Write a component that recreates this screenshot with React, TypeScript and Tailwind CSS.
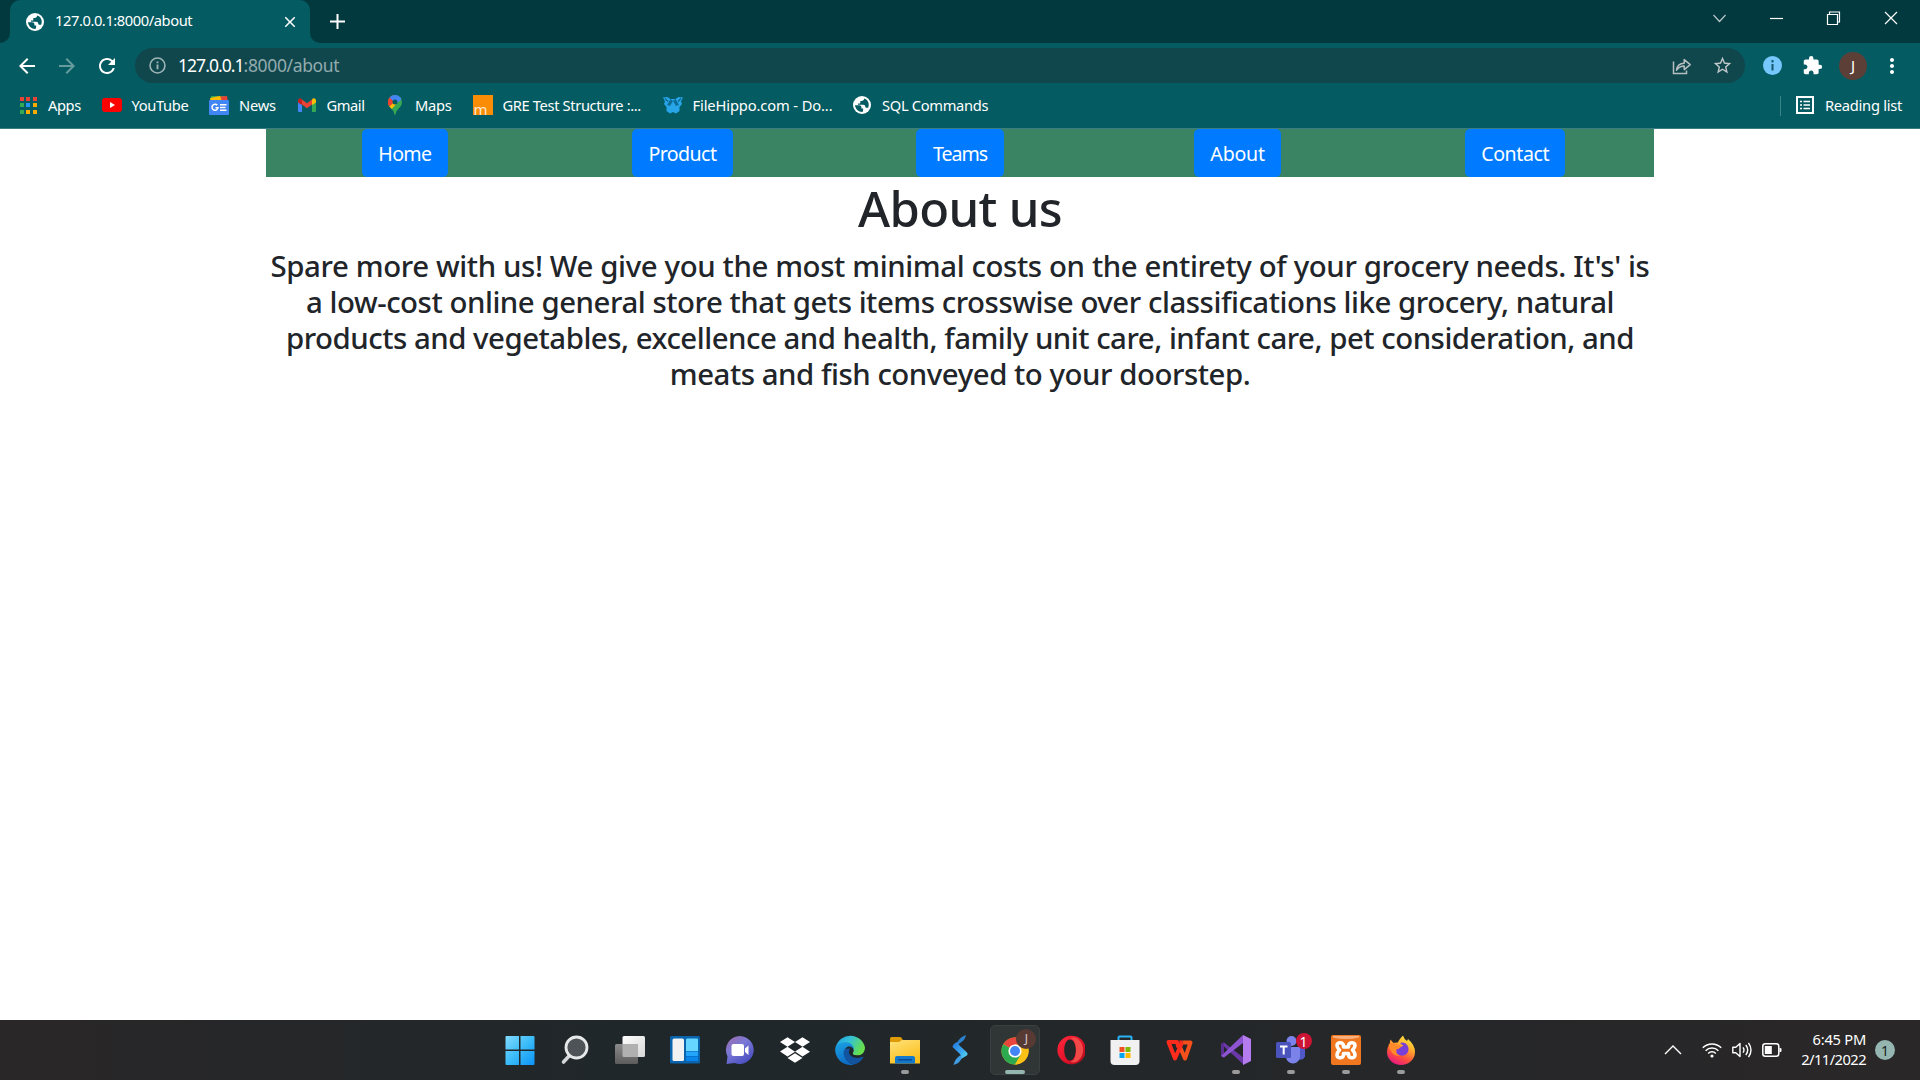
import type { ReactNode } from "react";
import {
  MdArrowBack,
  MdArrowForward,
  MdClose,
  MdExtension,
  MdMoreVert,
  MdRefresh,
  MdStarBorder,
} from "react-icons/md";
import { FaDropbox } from "react-icons/fa";

/* ---------- Browser icons ---------- */

function GlobeIcon() {
  return (
    <svg viewBox="0 0 18 18" className="size-[18px]">
      <circle cx="9" cy="9" r="9" fill="#fff" />
      <path
        d="M2 9.2h4.2c1.5 0 2.2.8 2.2 2v1.2h1.7v2.2c0 .6-.3 1-.7 1.300C5.500 16 2.300 13 2 9.200zM11.300 2.600c-.3 1.700-1.300 2.300-2.700 2.300H7.300v1.800c0 .6-.5.9-1.200.9H5v1.200h5.200c1.500 0 1.900.8 2 1.700.1.900.6 1.200 1.700 1.200h1.300C16.900 7.500 14.700 3.800 11.300 2.600z"
        fill="#055b62"
      />
    </svg>
  );
}

function AppsIcon() {
  const colors = ["#ea4335", "#ea4335", "#ea4335", "#34a853", "#2196f3", "#f9ab00", "#34a853", "#f9ab00", "#f9ab00"];
  return (
    <div className="grid grid-cols-3 gap-x-[2.500px] gap-y-[2.500px]">
      {colors.map((c, i) => (
        <svg key={i} viewBox="0 0 4 4" className="size-1">
          <rect width="4" height="4" fill={c} />
        </svg>
      ))}
    </div>
  );
}

function YouTubeIcon() {
  return (
    <svg viewBox="0 0 20 14" className="h-[14px] w-5">
      <rect width="20" height="14" rx="3" fill="#f00" />
      <path d="M8 4v6l5-3z" fill="#fff" />
    </svg>
  );
}

function NewsIcon() {
  return (
    <svg viewBox="0 0 20 20" className="size-5">
      <rect x="2" y="1" width="14" height="8" fill="#34a853" />
      <path d="M6 2l12-1 1 7H6z" fill="#ea4335" />
      <path d="M1 3l10-2 3 8H2z" fill="#fbbc04" />
      <rect y="5" width="20" height="15" rx="1" fill="#4285f4" />
      <path d="M8.300 10.300A3 3 0 1 0 9 12.700H6.500M11 9.700h6.500M11 12.500h5.500M11 15.300h6.500" stroke="#fff" strokeWidth="1.500" fill="none" />
    </svg>
  );
}

function GmailIcon() {
  return (
    <svg viewBox="0 0 18 14" className="h-[14px] w-[18px]">
      <path d="M0 3v10q0 1 1 1h3V6z" fill="#4285f4" />
      <path d="M18 3v10q0 1-1 1h-3V6z" fill="#34a853" />
      <path d="M4 1.500v5l5 3.800 5-3.800v-5L9 5.300z" fill="#ea4335" />
      <path d="M0 3v1.500L4 7V1.500L3.300.8C1.900-.4 0 .8 0 3z" fill="#c5221f" />
      <path d="M18 3v1.500L14 7V1.500l.7-.7C16.100-.4 18 .8 18 3z" fill="#fbbc04" />
    </svg>
  );
}

function MapsIcon() {
  return (
    <svg viewBox="0 0 14 20" className="h-5 w-[14px]">
      <defs>
        <clipPath id="pin">
          <path d="M7 0a7 7 0 0 0-7 7c0 3 1.500 4.600 3.300 6.600C5.200 15.700 6 17.300 6.300 19c.1.600.3 1 .7 1s.6-.4.7-1c.3-1.700 1.100-3.300 3-5.400C12.500 11.600 14 10 14 7a7 7 0 0 0-7-7z" />
        </clipPath>
      </defs>
      <g clipPath="url(#pin)">
        <rect width="14" height="20" fill="#34a853" />
        <path d="M14 3L0 18V6l7-4z" fill="#fbbc04" />
        <path d="M0 0h5l3 5-6 6H0z" fill="#ea4335" />
        <path d="M3 0h11v4L8 9 1.500 2.500z" fill="#4285f4" />
        <path d="M0 2l5 4-4 4H0z" fill="#ea4335" />
      </g>
      <circle cx="7" cy="7" r="2.500" fill="#055b62" />
    </svg>
  );
}

function ManhattanIcon() {
  return (
    <div className="flex h-5 w-5 justify-start bg-[#fb8c05] pl-px">
      <span className="pt-[4px] text-[15px] leading-5 text-[#ffe9cf]">m</span>
    </div>
  );
}

function HippoIcon() {
  return (
    <svg viewBox="0 0 20 18" className="h-[18px] w-5">
      <path d="M0 1.500L4.500 1 7.500 3h5l3-2 4.500.5-2 4 1 2.500-2.500 3v4L13 17.500l-3-1.500-3 1.500L3.500 15v-4L1 8l1-2.500z" fill="#27a5e8" />
      <path d="M7.500 3L4 9l3 1 3-5zM12.500 3L16 9l-3 1-3-5z" fill="#0d6d99" />
      <path d="M2 2.500l3 3M18 2.500l-3 3" stroke="#0b6a8c" strokeWidth="1.300" />
    </svg>
  );
}

function InfoIcon() {
  return (
    <svg viewBox="0 0 18 18" className="size-[17px]" fill="none" stroke="#9db4b6" strokeWidth="1.700">
      <circle cx="9" cy="9" r="7.900" />
      <path d="M9 8v5M9 4.800v1.800" strokeWidth="2" />
    </svg>
  );
}

function ShareIcon() {
  return (
    <svg viewBox="0 0 20 18" className="h-[18px] w-5" fill="none" stroke="#b5bfc0" strokeWidth="1.500">
      <path d="M1.500 4.500v12h13v-3" />
      <path d="M4.500 13.200c.5-4.200 3-6.700 7.700-6.900V2.600l6 5-6 5V9c-3.500 0-5.700 1.300-7.700 4.200z" strokeLinejoin="round" />
    </svg>
  );
}

function ReadingListIcon() {
  return (
    <svg viewBox="0 0 18 18" className="size-[18px]" fill="none" stroke="#fff" strokeWidth="2">
      <rect x="1" y="1" width="16" height="16" />
      <path d="M4 5.500h2M4 9h2M4 12.500h2M7.500 5.500H14M7.500 9H14M7.500 12.500H14" strokeWidth="1.600" />
    </svg>
  );
}

/* ---------- Taskbar icons ---------- */

function WindowsIcon() {
  return (
    <svg viewBox="0 0 30 30" className="size-[30px]">
      <defs>
        <linearGradient id="win" gradientUnits="userSpaceOnUse" x1="0" y1="0" x2="30" y2="30">
          <stop stopColor="#86dcfd" />
          <stop offset=".5" stopColor="#3cbcf9" />
          <stop offset="1" stopColor="#0b93f5" />
        </linearGradient>
      </defs>
      <path
        d="M1.500 1H14v13.500H.5V2q0-1 1-1zM15.500 1H28.500q1 0 1 1v12.500h-14zM.5 16H14v14H1.500q-1 0-1-1zM15.500 16h14v13q0 1-1 1h-13z"
        fill="url(#win)"
      />
    </svg>
  );
}

function SearchIcon() {
  return (
    <svg viewBox="0 0 30 30" className="size-[30px]">
      <path d="M10.500 19.500L3.500 27" stroke="#d4d6d7" strokeWidth="3.600" strokeLinecap="round" />
      <circle cx="16.500" cy="12.500" r="10.500" fill="#4d5356" stroke="#e6e8e9" strokeWidth="2.800" />
    </svg>
  );
}

function TaskViewIcon() {
  return (
    <svg viewBox="0 0 30 30" className="size-[30px]">
      <defs>
        <linearGradient id="tv" x2="1" y2="1">
          <stop stopColor="#fff" />
          <stop offset="1" stopColor="#d6d6d6" />
        </linearGradient>
        <linearGradient id="tv2" x2="0" y2="1">
          <stop stopColor="#8b8b8b" />
          <stop offset="1" stopColor="#5c5c5c" />
        </linearGradient>
      </defs>
      <rect x="7.500" y="1" width="22.500" height="21" rx="1.500" fill="url(#tv)" />
      <rect x="0" y="9" width="23" height="20" rx="1.500" fill="url(#tv2)" />
      <path d="M7.500 9H23v13H9q-1.500 0-1.500-1.500z" fill="#b0b0b0" />
    </svg>
  );
}

function WidgetsIcon() {
  return (
    <svg viewBox="0 0 30 30" className="size-[30px]">
      <rect y="1" width="30" height="27.500" rx="1.500" fill="#0963ad" />
      <rect x="2.500" y="3.500" width="11.500" height="22.500" rx="1.500" fill="#f2f2f2" />
      <path d="M16 4.500q0-1 1-1h10q1 0 1 1V16H16z" fill="#66d5ff" />
      <path d="M16 16.500h12V21H16z" fill="#23a5f9" />
      <path d="M16 21.500h12V25q0 1-1 1H17q-1 0-1-1z" fill="#0a86ea" />
    </svg>
  );
}

function ChatIcon() {
  return (
    <svg viewBox="0 0 30 30" className="size-[30px]">
      <defs>
        <linearGradient id="chat" x1="0" y1="0" x2=".7" y2="1">
          <stop stopColor="#a06aa8" />
          <stop offset=".45" stopColor="#7b78d6" />
          <stop offset="1" stopColor="#4a4fc0" />
        </linearGradient>
      </defs>
      <path d="M15 1a14 14 0 1 1-5.500 27L1.500 29l1-7.500A14 14 0 0 1 15 1z" fill="url(#chat)" />
      <rect x="6.500" y="9" width="12.500" height="12" rx="2" fill="#fff" />
      <path d="M20 13.500l3.500-3v9.500L20 17z" fill="#fff" />
    </svg>
  );
}

function EdgeIcon() {
  return (
    <svg viewBox="0 0 30 30" className="size-[30px]">
      <defs>
        <linearGradient id="eg1" x1="0" y1="0" x2="1" y2=".4">
          <stop stopColor="#1d9de0" />
          <stop offset=".5" stopColor="#35c1d6" />
          <stop offset="1" stopColor="#66e04d" />
        </linearGradient>
        <linearGradient id="eg2" x1="0" y1="0" x2=".4" y2="1">
          <stop stopColor="#1ba4e6" />
          <stop offset="1" stopColor="#0d6cc4" />
        </linearGradient>
      </defs>
      <path d="M.8 12A15 15 0 0 1 30 12.500c0 5-3.500 8-7.700 8-3.500 0-5.300-1.200-4.700-2.500 3-5-1.600-9.500-6.100-9.500C6 8.500 2 10 .8 12z" fill="url(#eg1)" />
      <path d="M.5 12C2.500 8.500 7 7.200 11 7.200c5 0 8.500 4 7.800 8-.3-2-2-3.800-4.500-3.800-4 0-5.500 4-4.500 8.500 1 5 5 9.300 9.500 9.500A15 15 0 0 1 .5 12z" fill="url(#eg2)" />
      <path d="M8.600 17c-.4 6 4.500 12.500 11.400 12.200 3.500-1 6.500-3.500 8.300-6.700.3-.7-.3-1-.8-.7-4.500 2.200-12.500 1.200-13.300-4-.2-1.500.2-3 .8-4-4-.8-6.200 1-6.400 3.200z" fill="#1254a0" />
      <path d="M14.200 17.500c.2-3 2.300-3.300 4.400-2.500.2 1.500-.9 2.500-.9 3.500 0 1.500 3 2.300 6 1.800-1 1.300-8.500 2.500-9.500-2.800z" fill="#1f2629" />
    </svg>
  );
}

function ExplorerIcon() {
  return (
    <svg viewBox="0 0 30 30" className="size-[30px]">
      <defs>
        <linearGradient id="fold" x2=".5" y2="1">
          <stop stopColor="#ffe27a" />
          <stop offset="1" stopColor="#fbbf1e" />
        </linearGradient>
      </defs>
      <path d="M0 3.500Q0 2 1.500 2h8.300q1 0 1.700.8L13 5.200V9H0z" fill="#dd9a06" />
      <path d="M0 7h9l3-2h18v23.500H0z" fill="url(#fold)" />
      <path d="M5 28.500V23q0-2 2-2h16q2 0 2 2v5.500z" fill="#1379cc" />
      <rect x="8" y="24" width="14" height="1.500" rx=".7" fill="#0a4a94" />
    </svg>
  );
}

function StreamIcon() {
  return (
    <svg viewBox="0 0 30 30" className="size-[30px]">
      <defs>
        <linearGradient id="st" x2="1" y2="1">
          <stop stopColor="#2176d8" />
          <stop offset=".55" stopColor="#3aa4ee" />
          <stop offset="1" stopColor="#57e0ef" />
        </linearGradient>
      </defs>
      <path d="M21 0q-1 5-4.500 7L13 9.500V6q3-4.500 8-6z" fill="#2a82cf" />
      <path d="M7.500 12q0-2 2-3.500L13 6.500q-.5 2.500 2 4.500l6.500 6q2 2 .3 3.500L16 24q1-3-1-5z" fill="url(#st)" />
      <path d="M8.500 30q1-4.500 3.500-7l3.500-3q1.500 2 .5 4.500-2 4-7.500 5.500z" fill="#3f9de4" />
    </svg>
  );
}

function ChromeIcon() {
  return (
    <svg viewBox="-1 0 30 30" className="size-[30px]">
      <circle cx="14" cy="16" r="13.500" fill="#fbc116" />
      <path d="M14 16L2.300 9.200a13.500 13.500 0 0 1 23.400 0z" fill="#e8453c" />
      <path d="M14 16L2.300 9.250A13.500 13.500 0 0 0 14 29.500l6-10z" fill="#2da94f" />
      <path d="M14 9.500h12a13.500 13.500 0 0 1-12 20l6-10z" fill="#fbc116" />
      <circle cx="14" cy="16" r="6.600" fill="#fff" />
      <circle cx="14" cy="16" r="5" fill="#4285f4" />
    </svg>
  );
}

function OperaIcon() {
  return (
    <svg viewBox="0 0 30 30" className="size-[30px]">
      <defs>
        <linearGradient id="op" x2=".9" y2=".9">
          <stop stopColor="#ff2a3c" />
          <stop offset=".6" stopColor="#e3122a" />
          <stop offset="1" stopColor="#b00d1c" />
        </linearGradient>
      </defs>
      <path d="M15 .8a14.300 14.300 0 1 1 0 28.400 14.300 14.300 0 0 1 0-28.400zM15 4.500c-3.500 0-5.800 5-5.800 10.500S11.500 25.500 15 25.500 20.800 20.500 20.800 15 18.500 4.500 15 4.500z" fillRule="evenodd" fill="url(#op)" />
      <path d="M15 3.500c2-1.500 6-1.300 8.500 1A14.200 14.200 0 0 1 23.500 25.500c-2.500 2.300-6.500 2.500-8.500 1 4 0 6-5.500 6-11.500S19 3.500 15 3.500z" fill="#f24848" />
    </svg>
  );
}

function StoreIcon() {
  return (
    <svg viewBox="0 0 30 30" className="size-[30px]">
      <path d="M8.500 6V2.500Q8.500 1.500 9.500 1.500h11q1 0 1 1V6" fill="none" stroke="#29b2f4" strokeWidth="2" />
      <path d="M.5 5.500q0-.5.500-.5h28q.5 0 .5.500V26q0 4-4 4h-21q-4 0-4-4z" fill="#f1f1f1" />
      <path d="M9.500 12h5v5h-5z" fill="#f25022" />
      <path d="M15.500 12h5v5h-5z" fill="#7fba00" />
      <path d="M9.500 18h5v5h-5z" fill="#00a4ef" />
      <path d="M15.500 18h5v5h-5z" fill="#ffb900" />
    </svg>
  );
}

function WpsIcon() {
  return (
    <svg viewBox="0 0 30 30" className="size-[30px]" fill="none" strokeWidth="4" strokeLinejoin="round">
      <path d="M17.500 7.500h8L20 23.500l-5-11.500" stroke="#f5501c" />
      <path d="M17.500 7.500h-3M13.500 12.500L12 7H3.500L10 23.500 17 7.500" stroke="#ff2b1c" />
    </svg>
  );
}

function VisualStudioIcon() {
  return (
    <svg viewBox="0 0 30 30" className="size-[30px]">
      <path d="M0 9l3-1.500L23 23v7L2 10.500V19.500L0 21z" fill="#6a38a8" />
      <path d="M0 9v12l3 1.500V7.500z" fill="#5b2e91" />
      <path d="M22 0l8 4v22l-8 4z" fill="#b57cf0" />
      <path d="M22 0v8L3 22.500 0 21z" fill="#8d55d2" />
    </svg>
  );
}

function TeamsIcon() {
  return (
    <svg viewBox="0 0 30 30" className="size-[30px]">
      <path d="M21 12h8v9.500a5 5 0 0 1-8 2z" fill="#5059c9" />
      <circle cx="15.500" cy="6" r="5" fill="#7b83eb" />
      <path d="M10 12h14v9a7 7 0 0 1-14 1z" fill="#7b83eb" />
      <rect x="0" y="7" width="15" height="16" rx="1.500" fill="#4b53bc" />
      <path d="M4 11.500h7.500M7.700 11.500v8" stroke="#fff" strokeWidth="2" />
    </svg>
  );
}

function XamppIcon() {
  return (
    <svg viewBox="0 0 30 30" className="size-[30px]">
      <rect width="30" height="30" rx="2" fill="#f0761f" />
      <path d="M2 1h26v1.500q-13 3-26 0z" fill="#f7b080" />
      <path
        d="M12.500 10.500C12 7 6 6.500 6 10.500c0 2 1 3 2.500 4.500C7 16.500 6 17.500 6 20c0 4 6 3.500 6.500 0v-1.500h5V20c.5 3.500 6.500 4 6.500 0 0-2.500-1-3.500-2.500-5 1.500-1.500 2.500-2.500 2.500-4.500 0-4-6-3.500-6.500 0V12h-5z"
        fill="none"
        stroke="#fff"
        strokeWidth="3.600"
        strokeLinejoin="round"
      />
    </svg>
  );
}

function FirefoxIcon() {
  return (
    <svg viewBox="0 0 30 30" className="size-[30px]">
      <defs>
        <linearGradient id="ff" x1=".8" y1="0" x2=".3" y2="1">
          <stop stopColor="#fff044" />
          <stop offset=".35" stopColor="#ffb02e" />
          <stop offset=".7" stopColor="#ff4f3c" />
          <stop offset="1" stopColor="#e31587" />
        </linearGradient>
      </defs>
      <path d="M4.500 4.500l3 3.500q2-.8 4-.3Q13 4.500 17 .5q1 3.500 4 5.500l1-2q7 6 7 13a14 13 0 0 1-28 0q0-4.500 2.500-8z" fill="url(#ff)" />
      <path d="M14 8q5-1.500 7.500 2.500 2.500 5-1 8.500-4 3-8.500.5-3-2-2.500-5.500 3 .5 4.500-1.500 2-1 3.500-2-1.500-.5-3.500-2.500z" fill="#7a3fd8" />
      <path d="M2.500 9.500l5-1 5 1.500 3 1.500q-2 2-5 3-1 5 3.500 6-5 1-8-3T2.500 9.500z" fill="#ff8a2a" />
    </svg>
  );
}

/* ---------- Browser chrome ---------- */

function TabStrip() {
  return (
    <div className="flex h-[43px]">
      <div className="w-[10px] rounded-br-[10px] bg-[#01393f]" />
      <div className="bg-[#01393f]">
        <div className="flex h-[43px] w-[300px] items-center rounded-t-[10px] bg-[#055b62] pl-4 pr-[11px]">
          <GlobeIcon />
          <span className="ml-[11px] flex-1 pb-[2px] text-[14.700px] tracking-[-0.430px] text-white">127.0.0.1:8000/about</span>
          <MdClose className="size-[18px] text-white" />
        </div>
      </div>
      <div className="flex flex-1 items-center rounded-bl-[10px] bg-[#01393f] pl-[20px]">
        <svg viewBox="0 0 15 15" className="size-[15px]" stroke="#fff" strokeWidth="2">
          <path d="M7.500 0v15M0 7.500h15" />
        </svg>
        <svg viewBox="0 0 200 14" className="mb-[7px] ml-auto mr-[21px] h-[14px] w-[200px]" fill="none" stroke="#fff" strokeWidth="1.200">
          <path d="M14.500 4l6 6.500 6-6.500" stroke="#b9c8c9" />
          <path d="M71 7.500h13" />
          <path d="M128.500 3.500h10v10h-10zM130.500 3.500v-2.500h10v10h-2" />
          <path d="M186 1l12 12M198 1l-12 12" />
        </svg>
      </div>
    </div>
  );
}

function Toolbar() {
  return (
    <div className="flex h-[45px] items-center pl-[15px]">
      <MdArrowBack className="size-6 shrink-0 text-white" />
      <MdArrowForward className="ml-4 size-6 shrink-0 text-[#679c9f]" />
      <MdRefresh className="ml-4 size-6 shrink-0 text-white" />
      <div className="ml-4 flex h-[35px] w-[1610px] shrink-0 items-center rounded-full bg-[#10474d] pl-[14px] pr-3">
        <InfoIcon />
        <span className="ml-3 pb-[1px] text-[17.500px] text-white">
          <span className="tracking-[-0.950px]">127.0.0.1</span>
          <span className="tracking-[-0.350px] text-[#93abad]">:8000/about</span>
        </span>
        <div className="ml-auto flex items-center gap-5">
          <ShareIcon />
          <MdStarBorder className="size-[21px] text-[#c1c8c9]" />
        </div>
      </div>
      <svg viewBox="0 0 19 19" className="ml-[18px] size-[19px] shrink-0">
        <circle cx="9.500" cy="9.500" r="9.500" fill="#76c8fc" />
        <path d="M9.500 8v6.500M9.500 4v2.500" stroke="#15566b" strokeWidth="2" />
      </svg>
      <MdExtension className="ml-[20px] size-[21px] shrink-0 text-white" />
      <div className="ml-4 flex size-7 shrink-0 items-center justify-center rounded-full bg-[#5c4038] text-[15px] text-white">
        J
      </div>
      <MdMoreVert className="ml-[13px] size-6 shrink-0 text-white" />
    </div>
  );
}

function Bookmark({ icon, label, className }: { icon: ReactNode; label: string; className: string }) {
  return (
    <div className={`flex shrink-0 items-center whitespace-nowrap text-[14.700px] text-white ${className}`}>
      <div className="mr-[10px] flex w-5 justify-center">{icon}</div>
      <span>{label}</span>
    </div>
  );
}

function BookmarksBar() {
  return (
    <div className="flex h-[41px] items-center border-b border-[#3b7d83] pb-[5px] pl-[18px] pr-[18px]">
      <Bookmark className="w-[83.500px] tracking-[-0.400px]" icon={<AppsIcon />} label="Apps" />
      <Bookmark className="w-[107.500px] tracking-[-0.350px]" icon={<YouTubeIcon />} label="YouTube" />
      <Bookmark className="w-[87.500px] tracking-[-0.200px]" icon={<NewsIcon />} label="News" />
      <Bookmark className="w-[88.500px] tracking-[-0.450px]" icon={<GmailIcon />} label="Gmail" />
      <Bookmark className="w-[87.500px] tracking-[-0.300px]" icon={<MapsIcon />} label="Maps" />
      <Bookmark className="w-[190px] tracking-[-0.370px]" icon={<ManhattanIcon />} label="GRE Test Structure :..." />
      <Bookmark className="w-[189.500px] tracking-[-0.120px]" icon={<HippoIcon />} label="FileHippo.com - Do..." />
      <Bookmark className="tracking-[-0.320px]" icon={<GlobeIcon />} label="SQL Commands" />
      <div className="ml-auto mr-[14px] h-5 w-px bg-[#3d8288]" />
      <Bookmark className="w-[107px] tracking-[-0.280px]" icon={<ReadingListIcon />} label="Reading list" />
    </div>
  );
}

/* ---------- Page ---------- */

function NavButton({ label, className }: { label: string; className: string }) {
  return (
    <div className="flex justify-center">
      <button className={`h-12 rounded-[5px] bg-[#007bff] pt-px text-center text-[19.600px] text-white ${className}`}>{label}</button>
    </div>
  );
}

function AboutPage() {
  return (
    <main className="flex-1 bg-white text-[#212529]">
      <div className="mx-auto w-[1388px]">
        <nav className="grid h-12 grid-cols-5 bg-[#3a8463]">
          <NavButton label="Home" className="w-[86px] tracking-[-0.690px]" />
          <NavButton label="Product" className="w-[101px] tracking-[-0.580px]" />
          <NavButton label="Teams" className="w-[88px] tracking-[-1.050px]" />
          <NavButton label="About" className="w-[87px] tracking-[-0.220px]" />
          <NavButton label="Contact" className="w-[100px] tracking-[-0.410px]" />
        </nav>
        <h1 className="mb-[10px] pt-px text-center text-[49px] font-medium leading-[60px] tracking-[-0.650px]">About us</h1>
        <h4 className="whitespace-nowrap text-center text-[29.400px] font-medium leading-[36px]">
          <span className="tracking-[-0.385px]">
            Spare more with us! We give you the most minimal costs on the entirety of your grocery needs. It's' is
          </span>
          <br />
          <span className="tracking-[-0.456px]">
            a low-cost online general store that gets items crosswise over classifications like grocery, natural
          </span>
          <br />
          <span className="tracking-[-0.485px]">
            products and vegetables, excellence and health, family unit care, infant care, pet consideration, and
          </span>
          <br />
          <span className="tracking-[-0.464px]">meats and fish conveyed to your doorstep.</span>
        </h4>
      </div>
    </main>
  );
}

/* ---------- Taskbar ---------- */

type TaskItem = { name: string; icon: ReactNode; running?: boolean; active?: boolean; badge?: ReactNode };

const taskItems: TaskItem[] = [
  { name: "start", icon: <WindowsIcon /> },
  { name: "search", icon: <SearchIcon /> },
  { name: "taskview", icon: <TaskViewIcon /> },
  { name: "widgets", icon: <WidgetsIcon /> },
  { name: "chat", icon: <ChatIcon /> },
  { name: "dropbox", icon: <FaDropbox className="size-[30px] text-white" /> },
  { name: "edge", icon: <EdgeIcon /> },
  { name: "explorer", icon: <ExplorerIcon />, running: true },
  { name: "stream", icon: <StreamIcon /> },
  {
    name: "chrome",
    icon: <ChromeIcon />,
    active: true,
    badge: (
      <div className="absolute right-[3px] top-[3px] flex size-5 items-center justify-center rounded-full bg-[#573a33] text-[12px] text-[#d8cfcc]">J</div>
    ),
  },
  { name: "opera", icon: <OperaIcon /> },
  { name: "store", icon: <StoreIcon /> },
  { name: "wps", icon: <WpsIcon /> },
  { name: "visualstudio", icon: <VisualStudioIcon />, running: true },
  {
    name: "teams",
    icon: <TeamsIcon />,
    running: true,
    badge: (
      <div className="absolute right-[4px] top-[8px] flex size-4 items-center justify-center rounded-full bg-[#cd1435] text-[14px] text-white">1</div>
    ),
  },
  { name: "xampp", icon: <XamppIcon />, running: true },
  { name: "firefox", icon: <FirefoxIcon />, running: true },
];

function TaskButton({ item }: { item: TaskItem }) {
  return (
    <div className="flex w-[55.060px] justify-center">
      <div
        className={`relative flex size-[50px] items-center justify-center rounded-[5px] ${
          item.active ? "border border-[#3a3f40] bg-[#303536]" : ""
        }`}
      >
        {item.icon}
        {item.badge}
        {item.running && <div className="absolute bottom-[1px] h-1 w-2 rounded-full bg-[#9a9a9a]" />}
        {item.active && <div className="absolute bottom-0 h-1 w-5 rounded-full bg-[#94b5b0]" />}
      </div>
    </div>
  );
}

function Taskbar() {
  return (
    <footer className="flex h-[60px] items-center bg-linear-to-r from-[#2a2728] via-[#1f272a] via-35% to-[#2a2728] pl-[492.400px] pr-[25px]">
      {taskItems.map((item) => (
        <TaskButton key={item.name} item={item} />
      ))}
      <div className="ml-auto flex items-center text-white">
        <svg viewBox="0 0 18 10" className="mr-[20px] h-[10px] w-[18px]" fill="none" stroke="#fff" strokeWidth="1.400">
          <path d="M1 9l8-8 8 8" />
        </svg>
        <svg viewBox="0 0 20 16" className="mr-[10px] h-4 w-5" fill="none" stroke="#fff" strokeWidth="1.500">
          <path d="M.8 5.800a13 13 0 0 1 18.400 0M3.600 8.700a9 9 0 0 1 12.800 0M6.200 11.400a5.300 5.300 0 0 1 7.600 0" />
          <circle cx="10" cy="14" r="1.600" fill="#fff" stroke="none" />
        </svg>
        <svg viewBox="0 0 20 18" className="mr-[10px] h-[18px] w-5" fill="none" stroke="#fff" strokeWidth="1.400" strokeLinejoin="round">
          <path d="M.8 6.200h3L8 2.500v13l-4.200-3.700h-3zM11 6.300q2 2.700 0 5.400M13.800 4q3.800 5 0 10M16.500 1.800q5 7.200 0 14.400" />
        </svg>
        <svg viewBox="0 0 20 14" className="h-[14px] w-5">
          <rect x=".8" y=".8" width="16" height="12.400" rx="2.500" fill="none" stroke="#fff" strokeWidth="1.500" />
          <rect x="2.800" y="3" width="7" height="8" fill="#fff" />
          <path d="M17.500 5h1q1 0 1 1v2q0 1-1 1h-1z" fill="#fff" />
        </svg>
        <div className="w-[84px] pb-[2px] text-right text-[14.700px] leading-5">
          <div className="tracking-[-0.250px]">6:45 PM</div>
          <div className="tracking-[-0.550px]">2/11/2022</div>
        </div>
        <div className="ml-[9px] flex size-5 items-center justify-center rounded-full bg-[#94b5b0] text-[14px] text-[#1b2222]">1</div>
      </div>
    </footer>
  );
}

export default function App() {
  return (
    <div className="flex h-[1080px] w-[1920px] flex-col overflow-hidden bg-white font-['Noto_Sans','Open_Sans',sans-serif]">
      <header className="h-[129px] bg-[#055b62]">
        <TabStrip />
        <Toolbar />
        <BookmarksBar />
      </header>
      <AboutPage />
      <Taskbar />
    </div>
  );
}
